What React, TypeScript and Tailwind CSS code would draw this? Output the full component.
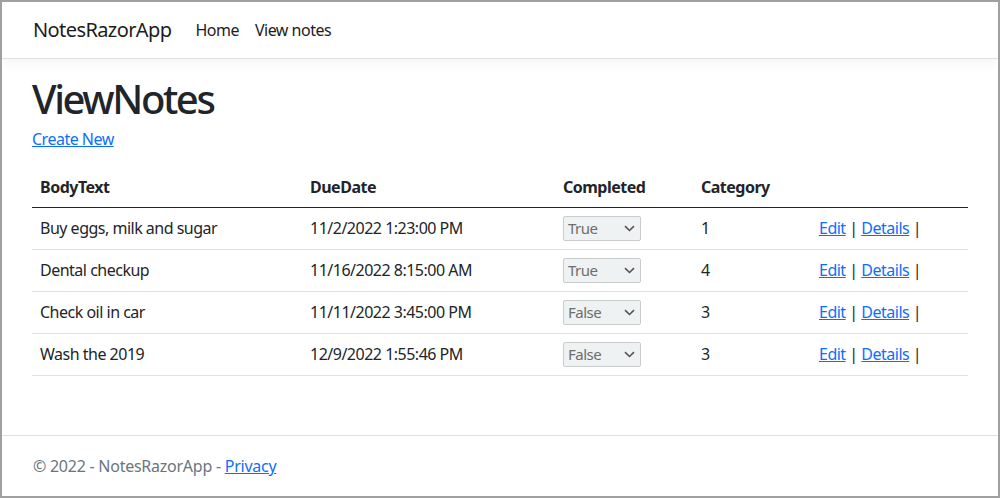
import React from "react";

const rows = [
  { body: "Buy eggs, milk and sugar", due: "11/2/2022 1:23:00 PM", done: "True", cat: "1" },
  { body: "Dental checkup", due: "11/16/2022 8:15:00 AM", done: "True", cat: "4" },
  { body: "Check oil in car", due: "11/11/2022 3:45:00 PM", done: "False", cat: "3" },
  { body: "Wash the 2019", due: "12/9/2022 1:55:46 PM", done: "False", cat: "3" },
];

function FakeSelect({ value }: { value: string }) {
  return (
    <div className="flex items-center justify-between w-[78px] h-[25px] border border-[#c9cccc] rounded-[2px] bg-[#eef2f2] pl-[4px] pr-[5px] text-[#6d6d6d] text-[15px] leading-none">
      <span>{value}</span>
      <svg width="11" height="7" viewBox="0 0 11 7" fill="none">
        <path d="M1 1.2 L5.5 5.5 L10 1.2" stroke="#555" strokeWidth="1.6" />
      </svg>
    </div>
  );
}

export default function App() {
  return (
    <div
      className="w-[1000px] h-[498px] border-2 border-[#a0a0a0] bg-white flex flex-col text-[#212529] overflow-hidden tracking-[-0.5px]"
      style={{ fontFamily: '"Noto Sans", "Open Sans", sans-serif' }}
    >
      <nav className="h-[57px] shrink-0 border-b border-[#dde3e3] shadow-[0_4px_12px_rgba(0,0,0,0.05)] flex items-center pl-[31px]">
        <span className="text-[20px] text-[#1c1c1c] mr-[16px] tracking-[-0.6px]">NotesRazorApp</span>
        <span className="text-[16px] px-[8px] text-[#1c1c1c]">Home</span>
        <span className="text-[16px] px-[8px] text-[#1c1c1c]">View notes</span>
      </nav>
      <main className="px-[30px] pt-[16px] flex-1">
        <h1 className="text-[40px] leading-[48px] font-medium mb-[8px] tracking-[-2.4px]">ViewNotes</h1>
        <p className="leading-[24px] mb-[16px] -mt-[4px]">
          <span className="text-[#0d6efd] underline">Create New</span>
        </p>
        <table className="w-[936px] table-fixed border-collapse text-[16px]">
          <colgroup>
            <col className="w-[270px]" />
            <col className="w-[253px]" />
            <col className="w-[138px]" />
            <col className="w-[118px]" />
            <col className="w-[157px]" />
          </colgroup>
          <thead>
            <tr className="border-b border-[#212529]">
              <th className="text-left font-bold px-[8px] h-[40px] leading-[24px]">BodyText</th>
              <th className="text-left font-bold px-[8px] leading-[24px]">DueDate</th>
              <th className="text-left font-bold px-[8px] leading-[24px]">Completed</th>
              <th className="text-left font-bold px-[8px] leading-[24px]">Category</th>
              <th className="px-[8px]"></th>
            </tr>
          </thead>
          <tbody>
            {rows.map((r, i) => (
              <tr key={i} className="border-b border-[#dde3e3]">
                <td className="px-[8px] leading-[24px] h-[42px]">{r.body}</td>
                <td className="px-[8px] leading-[24px]">{r.due}</td>
                <td className="px-[8px]">
                  <FakeSelect value={r.done} />
                </td>
                <td className="px-[8px] leading-[24px]">{r.cat}</td>
                <td className="px-[8px] leading-[24px]">
                  <span className="text-[#0d6efd] underline">Edit</span> |{" "}
                  <span className="text-[#0d6efd] underline">Details</span> |
                </td>
              </tr>
            ))}
          </tbody>
        </table>
      </main>
      <footer className="h-[61px] shrink-0 border-t border-[#dde3e3] flex items-center pl-[31px] text-[#6c757d] text-[16px] tracking-[-0.25px]">
        <span>
          © 2022 - NotesRazorApp - <span className="text-[#0d6efd] underline">Privacy</span>
        </span>
      </footer>
    </div>
  );
}
